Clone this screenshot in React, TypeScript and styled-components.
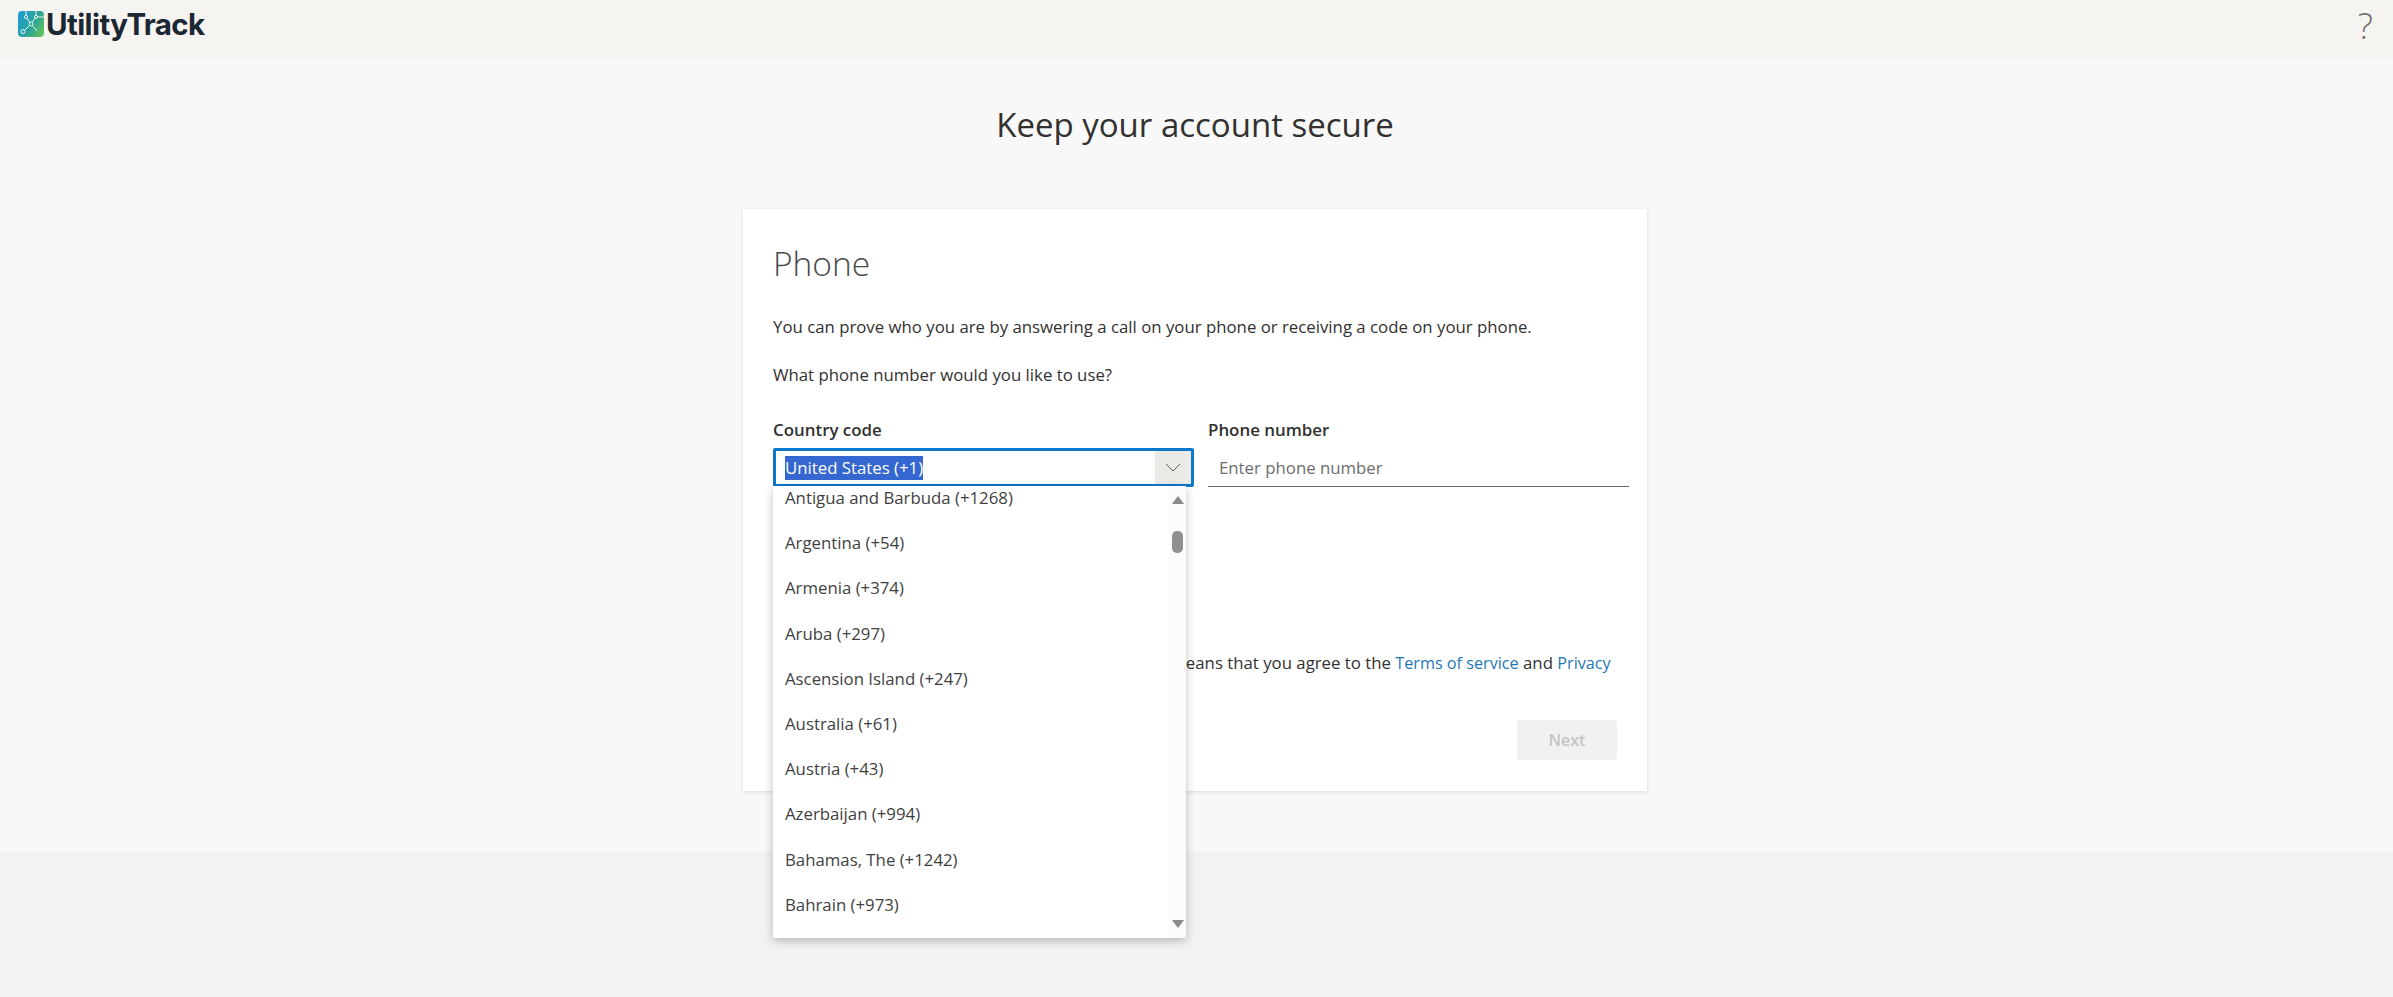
import React from 'react';
import styled, { createGlobalStyle } from 'styled-components';

const countries = [
  'Antigua and Barbuda (+1268)',
  'Argentina (+54)',
  'Armenia (+374)',
  'Aruba (+297)',
  'Ascension Island (+247)',
  'Australia (+61)',
  'Austria (+43)',
  'Azerbaijan (+994)',
  'Bahamas, The (+1242)',
  'Bahrain (+973)',
];

const GlobalStyle = createGlobalStyle`
  html, body {
    margin: 0;
    padding: 0;
    height: 100%;
  }
  body {
    font-family: "Open Sans", "Noto Sans", sans-serif;
    color: #323130;
    background: #f2f2f2;
  }
`;

const Page = styled.div`
  width: 2393px;
  height: 997px;
  display: flex;
  flex-direction: column;
  overflow: hidden;
`;

const Header = styled.header`
  height: 58px;
  flex: none;
  display: flex;
  align-items: center;
  justify-content: space-between;
  padding: 0 20px 0 18px;
  background: #f6f4f1;
`;

const Brand = styled.div`
  display: flex;
  align-items: center;
  gap: 2px;
  margin-top: -10px;
`;

const BrandName = styled.span`
  font-family: Inter, "Liberation Sans", sans-serif;
  font-size: 29.5px;
  font-weight: 700;
  letter-spacing: -0.6px;
  color: #1b2733;
`;

const Help = styled.span`
  font-size: 36px;
  font-weight: 300;
  line-height: 48px;
  color: #6f6f6f;
  margin-top: -6px;
`;

const Main = styled.main`
  height: 793px;
  flex: none;
  box-sizing: border-box;
  padding-right: 3px;
  background: #f8f8f8;
  display: flex;
  flex-direction: column;
  align-items: center;
`;

const Title = styled.h1`
  margin: 43px 0 0;
  font-size: 33px;
  line-height: 48px;
  font-weight: 400;
  color: #323130;
`;

const Card = styled.section`
  width: 904px;
  height: 582px;
  margin-top: 60px;
  box-sizing: border-box;
  padding: 29px 20px 0 30px;
  background: #fff;
  box-shadow: 0 1px 4px rgba(0, 0, 0, 0.12);
  display: flex;
  flex-direction: column;
`;

const CardTitle = styled.h2`
  margin: 0;
  font-size: 33.5px;
  line-height: 50px;
  font-weight: 300;
  color: #4a4a4a;
`;

const Copy = styled.p<{ $top: number }>`
  margin: ${(p) => p.$top}px 0 0;
  font-size: 16.8px;
  line-height: 24px;
  color: #323130;
`;

const Fields = styled.div`
  display: grid;
  grid-template-columns: 421px 421px;
  column-gap: 14px;
  margin-top: 31px;
`;

const Field = styled.div`
  position: relative;
  display: flex;
  flex-direction: column;
`;

const Label = styled.label`
  font-size: 16.9px;
  line-height: 24px;
  font-weight: 600;
  color: #323130;
  margin-bottom: 6px;
`;

const ComboBox = styled.div`
  height: 39px;
  box-sizing: border-box;
  border: 3px solid #0b78cc;
  border-radius: 2px;
  display: flex;
  align-items: center;
  justify-content: space-between;
  padding-left: 9px;
  background: #fff;
`;

const Selected = styled.span`
  background: #3467d0;
  color: #fff;
  font-size: 16.8px;
  line-height: 24px;
`;

const Caret = styled.span`
  width: 36px;
  height: 100%;
  display: flex;
  align-items: center;
  justify-content: center;
  background: #eceae7;
  color: #5f5f5f;
`;

const PhoneInput = styled.input`
  height: 39px;
  box-sizing: border-box;
  border: 0;
  border-bottom: 1px solid #6b6b6b;
  outline: 0;
  padding: 0 11px;
  font: inherit;
  font-size: 16.8px;
  background: transparent;
  &::placeholder {
    color: #6d6d6d;
    opacity: 1;
  }
`;

const Dropdown = styled.div`
  position: absolute;
  top: 68px;
  left: 0;
  width: 413px;
  height: 452px;
  background: #fff;
  box-shadow: 0 3px 10px rgba(0, 0, 0, 0.24);
  border-radius: 0 0 2px 2px;
  overflow: hidden;
  z-index: 2;
  display: flex;
`;

const Options = styled.ul`
  flex: 1;
  list-style: none;
  margin: -11px 0 0;
  padding: 0;
`;

const Option = styled.li`
  height: 45.2px;
  display: flex;
  align-items: center;
  padding-left: 12px;
  font-size: 16.8px;
  color: #3f3f3f;
`;

const Scrollbar = styled.div`
  width: 17px;
  flex: none;
  background: #fbfbfb;
  display: flex;
  flex-direction: column;
  align-items: center;
  padding: 10px 0 10px;
  box-sizing: border-box;
  color: #8a8a8a;
`;

const Thumb = styled.div`
  width: 11px;
  height: 22px;
  margin-top: 26px;
  border-radius: 5px;
  background: #8f8f8f;
`;

const ArrowDown = styled.div`
  margin-top: auto;
  display: flex;
`;

const Terms = styled(Copy)`
  margin-top: 164px;
`;

const Link = styled.a`
  color: #1f77b4;
  font-size: 16.2px;
  text-decoration: none;
`;

const Actions = styled.div`
  margin-top: auto;
  margin-bottom: 31px;
  padding-right: 10px;
  display: flex;
  justify-content: flex-end;
`;

const NextButton = styled.button`
  width: 100px;
  height: 40px;
  border: 0;
  border-radius: 2px;
  background: #f1f1f1;
  color: #c4c4c4;
  font: inherit;
  font-size: 16px;
  font-weight: 600;
`;

const Footer = styled.footer`
  flex: 1;
  background: #f2f2f2;
`;

const Logo = () => (
  <svg width="26" height="26" viewBox="0 0 26 26" fill="none">
    <defs>
      <linearGradient id="logo-fill" x1="0" y1="0.2" x2="1" y2="0.8">
        <stop offset="0" stopColor="#1f9fd0" />
        <stop offset="0.55" stopColor="#2aa39a" />
        <stop offset="1" stopColor="#62c25a" />
      </linearGradient>
    </defs>
    <rect width="26" height="26" rx="4" fill="url(#logo-fill)" />
    <g stroke="#e6f5f2" strokeWidth="1">
      <path d="M8 0v6l5 7-7 7M13 13l5-7V0M18 6h8M13 13l6 7" />
      <circle cx="13" cy="13" r="2" fill="#2aa39a" />
      <circle cx="5" cy="20.5" r="2" fill="#2aa0b0" />
      <circle cx="8" cy="6" r="1.6" fill="#2aa0b0" />
      <circle cx="18" cy="6" r="1.6" fill="#3ab08c" />
    </g>
  </svg>
);

const Triangle = ({ down }: { down?: boolean }) => (
  <svg width="12" height="9" viewBox="0 0 12 9" fill="currentColor">
    <path d={down ? 'M0 1h12L6 9z' : 'M6 0l6 8H0z'} />
  </svg>
);

const App = () => {
  return (
    <Page>
      <GlobalStyle />
      <Header>
        <Brand>
          <Logo />
          <BrandName>UtilityTrack</BrandName>
        </Brand>
        <Help>?</Help>
      </Header>
      <Main>
        <Title>Keep your account secure</Title>
        <Card>
          <CardTitle>Phone</CardTitle>
          <Copy $top={27}>You can prove who you are by answering a call on your phone or receiving a code on your phone.</Copy>
          <Copy $top={24}>What phone number would you like to use?</Copy>
          <Fields>
            <Field>
              <Label>Country code</Label>
              <ComboBox>
                <Selected>United States (+1)</Selected>
                <Caret>
                  <svg width="16" height="9" viewBox="0 0 16 9" fill="none" stroke="currentColor" strokeWidth="1">
                    <path d="M1 1l7 7 7-7" />
                  </svg>
                </Caret>
              </ComboBox>
              <Dropdown>
                <Options>
                  {countries.map((c) => (
                    <Option key={c}>{c}</Option>
                  ))}
                </Options>
                <Scrollbar>
                  <Triangle />
                  <Thumb />
                  <ArrowDown>
                    <Triangle down />
                  </ArrowDown>
                </Scrollbar>
              </Dropdown>
            </Field>
            <Field>
              <Label>Phone number</Label>
              <PhoneInput placeholder="Enter phone number" />
            </Field>
          </Fields>
          <Terms $top={164}>
            Message and data rates may apply. Choosing Next means that you agree to the <Link>Terms of service</Link> and <Link>Privacy and cookies statement.</Link>
          </Terms>
          <Actions>
            <NextButton disabled>Next</NextButton>
          </Actions>
        </Card>
      </Main>
      <Footer />
    </Page>
  );
};

export default App;
